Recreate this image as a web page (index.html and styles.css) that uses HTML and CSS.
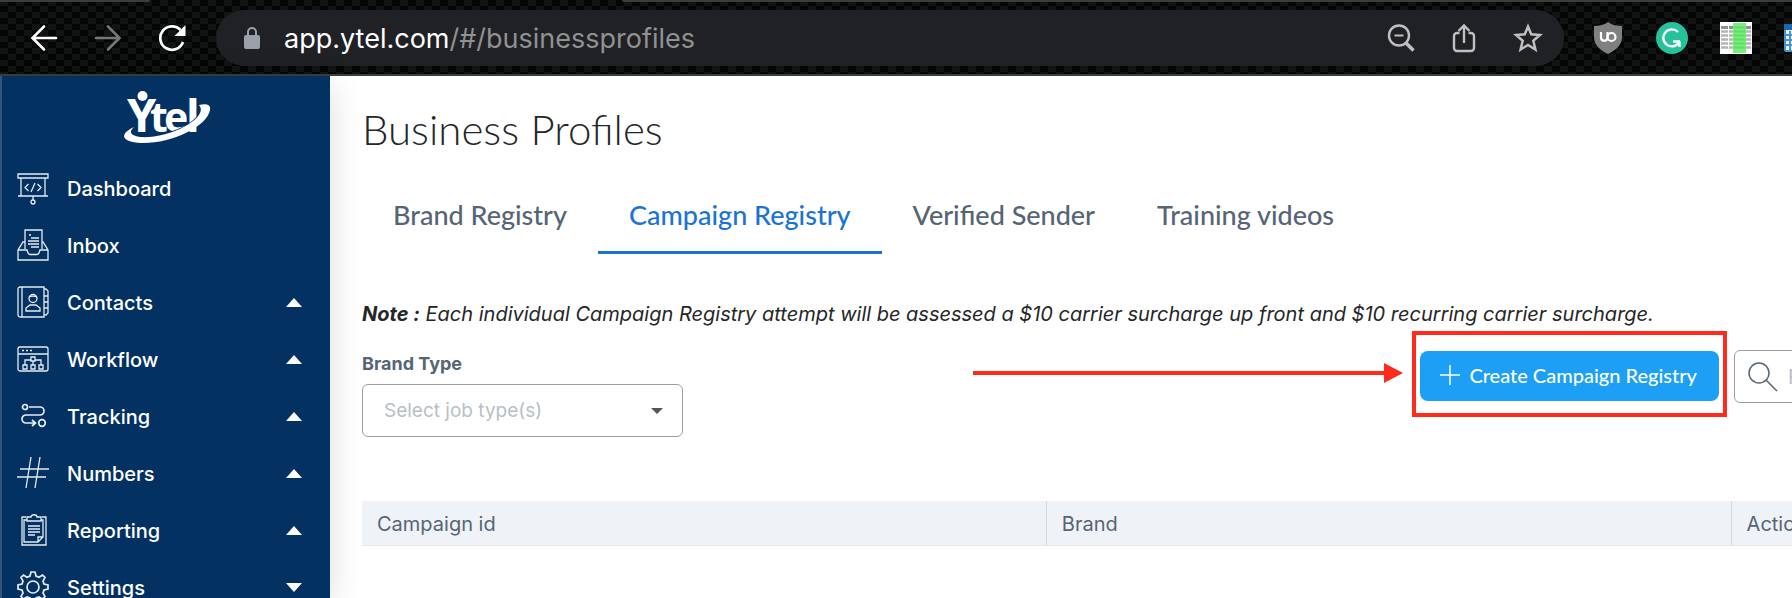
FILE: index.html
```html
<!DOCTYPE html>
<html lang="en">
<head>
<meta charset="utf-8">
<title>Business Profiles</title>
<link rel="stylesheet" href="styles.css">
</head>
<body>
<header class="browser">
  <div class="tabstrip"><span class="tab-left"></span><span class="tab-right"></span></div>
  <div class="toolbar">
    <div class="nav-buttons">
      <button class="tool" aria-label="Back"><svg width="28" height="28" viewBox="0 0 28 28" fill="none" stroke="#fff" stroke-width="2.600" stroke-linecap="round"><path d="M14 2.500 2.500 14 14 25.500M3 14H26"/></svg></button>
      <button class="tool" aria-label="Forward"><svg width="28" height="28" viewBox="0 0 28 28" fill="none" stroke="#777" stroke-width="2.600" stroke-linecap="round"><path d="M14 2.500 25.500 14 14 25.500M25 14H2"/></svg></button>
      <button class="tool" aria-label="Reload"><svg width="28" height="28" viewBox="0 0 28 28"><path d="M25 18A11.700 11.700 0 1 1 22.500 6" fill="none" stroke="#fff" stroke-width="2.700"/><path d="M27.500 1V12H16.500Z" fill="#fff"/></svg></button>
    </div>
    <div class="address">
      <svg class="lock" width="16" height="22" viewBox="0 0 16 22"><rect y="8" width="16" height="14" rx="2" fill="#9aa0a9"/><path d="M4 9V5a4 4 0 0 1 8 0V9" fill="none" stroke="#9aa0a9" stroke-width="2"/></svg>
      <span class="url">app.ytel.com<span class="path">/#/businessprofiles</span></span>
      <button class="tool" aria-label="Zoom out"><svg width="28" height="28" viewBox="0 0 28 28" fill="none" stroke="#c0c0c0" stroke-width="2.400"><circle cx="12" cy="11.500" r="10"/><path d="M18.500 18.500 26.500 26.500" stroke-width="3.500"/><path d="M7.500 11.500h9" stroke-width="2"/></svg></button>
      <button class="tool" aria-label="Share"><svg width="24" height="30" viewBox="0 0 24 30" fill="none" stroke="#c0c0c0" stroke-width="2.400"><path d="M7.500 10H5a3 3 0 0 0-3 3V25a3 3 0 0 0 3 3H19a3 3 0 0 0 3-3V13a3 3 0 0 0-3-3H16.500M12 20V3M6.500 8 12 2.500 17.500 8"/></svg></button>
      <button class="tool" aria-label="Bookmark"><svg width="30" height="30" viewBox="0 0 30 30" fill="none" stroke="#c0c0c0" stroke-width="2.500"><path d="M15 3.500 18.200 11.300 27 12 20.300 17.800 22.400 26.500 15 21.900 7.600 26.500 9.700 17.800 3 12 11.800 11.300Z"/></svg></button>
    </div>
    <div class="extensions">
      <button class="tool" aria-label="uBlock Origin"><svg width="32" height="32" viewBox="0 0 32 32"><path d="M16 0C12 3 7 4 2 4V15C2 23 8 28 16 32C24 28 30 23 30 15V4C25 4 20 3 16 0Z" fill="#808080"/><path d="M9 10v6a3.300 3.300 0 0 0 6.500 0V10" fill="none" stroke="#fff" stroke-width="2.200"/><circle cx="19.500" cy="15" r="4" fill="none" stroke="#fff" stroke-width="2.200"/></svg></button>
      <button class="tool" aria-label="Grammarly"><svg width="32" height="32" viewBox="0 0 32 32"><circle cx="16" cy="16" r="16" fill="#26c29b"/><path d="M22 10A8.500 8.500 0 1 0 23 20.500M17 19.500H24M23.500 25V19.500" fill="none" stroke="#fff" stroke-width="2.400"/></svg></button>
      <button class="tool" aria-label="Table columns"><svg width="32" height="32" viewBox="0 0 32 32"><path fill="#fff" d="M0 0h32v32H0z"/><path d="M1 5.500h30" stroke="#89929b" stroke-width="3" stroke-dasharray="7 1"/><path d="M1 9.500h30M1 13.500h30M1 17.500h30M1 21.500h30M1 25.500h30" stroke="#b5b5b5" stroke-width="2.500" stroke-dasharray="7 1"/><path fill="#78ee7b" d="M13 1h13v30H13z"/><path d="M14 5.500h11M14 9.500h11M14 13.500h11M14 17.500h11M14 21.500h11M14 25.500h11" stroke="#63d968" stroke-width="2"/></svg></button>
      <button class="tool" aria-label="Calendar"><svg width="32" height="32" viewBox="0 0 32 32"><rect y="2" width="32" height="28" rx="2" fill="#4b94cf"/><path d="M2 8h28v20H2z" fill="#e8f3fb"/><path d="M0 2h32v6H0z" fill="#1c67ad"/><path d="M2 13h28M2 18h28M2 23h28M6 9v19M11 9v19M16 9v19" stroke="#4b94cf" stroke-width="2"/></svg></button>
    </div>
  </div>
</header>
<div class="app">
  <nav class="sidebar">
    <a class="logo" href="#" aria-label="Ytel home">
      <svg width="88" height="56" viewBox="0 0 88 56" fill="#fff">
        <circle cx="19.500" cy="6" r="5"/>
        <g class="logo-type"><text x="4" y="42" font-size="47">Y</text><text x="27" y="42" font-size="41">t</text><text x="41" y="42" font-size="41">e</text><text x="63" y="42" font-size="45">l</text></g>
        <path d="M22 46C46 44 66 37 76 24L80 26L50 50Z" fill="#033262"/>
        <path d="M76 15C84 13 88 15 87 20C84 37 47 54 18 53C-2 52-4 44 11 37C3 44 12 48 26 47C54 45 86 26 76 15Z"/>
      </svg>
    </a>
    <ul class="menu">
      <li><a href="#"><svg class="icon" viewBox="0 0 32 32"><path d="M1 1h30v4H1zM4 5v18M28 5v18M1 23h30M16 23v4M11.500 11 8 14.500l3.500 3.500M20.500 11l3.500 3.500-3.500 3.500M18 10l-4 9"/><circle cx="16" cy="29" r="2"/></svg><span>Dashboard</span></a></li>
      <li><a href="#"><svg class="icon" viewBox="0 0 32 32"><path d="M8 19V0h17v19M7.500 12H6L1 20V30H31V20L26 12H25M1 20H10C11 23 11 24.500 13 24.500H20C22 24.500 22 23 23 20H31M12 5h2M14 8h8M11 11h11M11 14h11M14 17h8"/></svg><span>Inbox</span></a></li>
      <li><a href="#"><svg class="icon" viewBox="0 0 32 32"><path d="M3 0H27V30H3A2 2 0 0 1 1 28V2A2 2 0 0 1 3 0ZM5 0V30M27 2h2l2 2v5h-4M27 9h4v6h-4M27 15h4v6h-4M27 21h4v5l-2 2h-2M9 24V21l4-3h6l4 3v3ZM12 10c2-1 6-1 8 0"/><circle cx="16" cy="11.500" r="4"/></svg><span>Contacts</span><svg class="chev" viewBox="0 0 16 9"><path d="M8 0 16 9H0Z"/></svg></a></li>
      <li><a href="#"><svg class="icon" viewBox="0 0 32 32"><rect x="1" y="3" width="30" height="24" rx="2"/><path d="M1 10H31M5 6.500h2M9 6.500h2M13 6.500h2M14 13h4v4h-4zM6 21h4v4H6zM14 21h4v4h-4zM22 21h4v4h-4zM16 17v4M8 21v-5h6M18 16h6v5"/></svg><span>Workflow</span><svg class="chev" viewBox="0 0 16 9"><path d="M8 0 16 9H0Z"/></svg></a></li>
      <li><a href="#"><svg class="icon thick" viewBox="0 0 32 32"><circle cx="8" cy="6" r="2.500"/><circle cx="25" cy="22" r="3.300"/><path d="M12 6H23a4 4 0 0 1 0 8H9a4 4 0 0 0 0 8H18M15 19l3.500 3-3.500 3"/></svg><span>Tracking</span><svg class="chev" viewBox="0 0 16 9"><path d="M8 0 16 9H0Z"/></svg></a></li>
      <li><a href="#"><svg class="icon" viewBox="0 0 32 32"><path d="M14-1 9 30M23-1 18 30M3 11H32M0 19H29"/></svg><span>Numbers</span><svg class="chev" viewBox="0 0 16 9"><path d="M8 0 16 9H0Z"/></svg></a></li>
      <li><a href="#"><svg class="icon" viewBox="0 0 32 32"><path d="M9 2H5V30H29V2H25M10 5H7V27H21L26 22V5H24M21 27V22h5M10 6V2h4c0-3 6-3 6 0h4v4ZM11 11h12M11 14h12M11 17h12M11 20h7"/></svg><span>Reporting</span><svg class="chev" viewBox="0 0 16 9"><path d="M8 0 16 9H0Z"/></svg></a></li>
      <li><a href="#"><svg class="icon thick" viewBox="0 0 32 32"><circle cx="16" cy="15" r="6"/><path d="M14 0h4l1 4 3 1.200L25.500 3 28 5.500 26 9l1 3 4 1v4l-4 1-1 3 2 3.500L25.500 27 22 25l-3 1-1 4h-4l-1-4-3-1-3.500 2L4 24.500 6 21l-1-3-4-1v-4l4-1 1-3L4 5.500 6.500 3 10 5.200 13 4Z"/></svg><span>Settings</span><svg class="chev" viewBox="0 0 16 9"><path d="M0 0H16L8 9Z"/></svg></a></li>
    </ul>
  </nav>
  <main class="main">
    <div class="content">
      <h1>Business Profiles</h1>
      <div class="tabs" role="tablist">
        <button role="tab">Brand Registry</button>
        <button role="tab" class="active" aria-selected="true">Campaign Registry</button>
        <button role="tab">Verified Sender</button>
        <button role="tab">Training videos</button>
      </div>
      <p class="note"><strong>Note :</strong> Each individual Campaign Registry attempt will be assessed a $10 carrier surcharge up front and $10 recurring carrier surcharge.</p>
      <div class="filters">
        <div class="field">
          <label for="brand-type">Brand Type</label>
          <div class="select">
            <select id="brand-type"><option>Select job type(s)</option></select>
            <svg width="12" height="6" viewBox="0 0 12 6"><path d="M0 0H12L6 6Z" fill="#555"/></svg>
          </div>
        </div>
        <div class="actions">
          <div class="callout">
            <button class="create"><svg width="20" height="20" viewBox="0 0 20 20" stroke="#fff" stroke-width="1.500"><path d="M10 0V20M0 10H20"/></svg>Create Campaign Registry</button>
            <span class="frame"></span>
            <svg class="arrow" width="430" height="20" viewBox="0 0 430 20"><path d="M0 8H411V0L430 10 411 20V12H0Z" fill="#ff2a1c"/></svg>
          </div>
          <div class="search">
            <svg width="30" height="30" viewBox="0 0 30 30" fill="none" stroke="#566575" stroke-width="1.500"><circle cx="11" cy="11" r="10"/><path d="M18 18 29 29"/></svg>
            <input type="search" placeholder="Find" aria-label="Find">
          </div>
        </div>
      </div>
      <table>
        <thead><tr><th>Campaign id</th><th>Brand</th><th>Actions</th></tr></thead>
      </table>
    </div>
  </main>
</div>
</body>
</html>
```

FILE: styles.css
```css
* { box-sizing: border-box; }
body { margin: 0; height: 100vh; overflow: hidden; display: flex; flex-direction: column; background: #fff; font-family: Inter, "Liberation Sans", sans-serif; color: #242628; }
button { font: inherit; border: 0; padding: 0; background: none; cursor: pointer; }
svg { display: block; flex: none; }

.browser { flex: none; border-bottom: 2px solid #3d3d3e; background-color: #121313; background-image: conic-gradient(#040505 25%, transparent 0 50%, #040505 0 75%, transparent 0); background-size: 16px 12px; }
.tabstrip { display: flex; justify-content: space-between; gap: 472px; height: 2px; }
.tab-left { width: 150px; background: #3d3d3e; border-radius: 0 0 4px 0; }
.tab-right { flex: 1; background: #3d3d3e; border-radius: 0 0 0 4px; }
.toolbar { display: flex; align-items: center; padding: 8px 0; height: 72px; overflow: hidden; }
.nav-buttons { display: flex; gap: 36px; padding: 0 30px; width: 216px; flex: none; }
.address { flex: 1; display: flex; align-items: center; gap: 37px; height: 56px; padding: 0 21px 0 28px; border-radius: 28px; background: #202124; }
.lock { margin-right: -13px; }
.url { flex: 1; font-size: 27px; color: #fff; }
.path { color: #909192; }
.extensions { display: flex; gap: 32px; width: 228px; padding-left: 28px; flex: none; }

.app { flex: 1; display: flex; min-height: 0; border-left: 2px solid #35597f; }
.sidebar { width: 328px; flex: none; background: #033262; box-shadow: 0 8px 32px rgba(0, 0, 0, .14); overflow: hidden; z-index: 1; }
.logo { display: block; width: 88px; margin: 14px auto 14px 121px; }
.logo svg { overflow: visible; }
.logo-type { font-family: "Open Sans", sans-serif; font-weight: 700; }
.menu { list-style: none; margin: 0; padding: 0; }
.menu a { display: flex; align-items: center; gap: 18px; height: 57px; padding: 0 28px 0 15px; color: #fff; font-size: 20px; font-weight: 500; text-decoration: none; }
.menu span { flex: 1; }
.icon { width: 32px; height: 32px; fill: none; stroke: #e6ecf2; stroke-width: 1.3; overflow: visible; }
.thick { stroke-width: 1.7; }
.chev { width: 16px; height: 9px; fill: #fff; }

.main { flex: 1; min-width: 0; overflow: hidden; padding-left: 32px; }
.content { width: calc(100% + 282px); }
h1 { margin: 27px 0 0; font: 300 42px/52px Lato, sans-serif; }
.tabs { display: flex; margin-top: 29px; }
.tabs button { height: 70px; padding: 0 31px 6px; border-bottom: 3px solid transparent; font: 500 27px/32px Lato, sans-serif; color: #566575; }
.tabs .active { color: #1a73d6; border-color: #1a73d6; }
.note { margin: 46px 0 0; font-size: 20px; line-height: 28px; font-style: italic; }
.filters { display: flex; justify-content: space-between; margin-top: 22px; }
.field label { display: block; font-size: 18px; font-weight: 700; line-height: 28px; margin-bottom: 6px; color: #566575; }
.select { display: grid; align-items: center; width: 321px; }
.select > * { grid-area: 1 / 1; }
.select svg { justify-self: end; margin-right: 20px; pointer-events: none; }
select { appearance: none; width: 100%; height: 53px; padding: 0 21px; border: 1px solid #97a0aa; border-radius: 6px; background: #fff; font: 19px Inter, sans-serif; color: #b7bfc5; }
.actions { display: flex; gap: 15px; }
.callout { position: relative; padding-top: 1px; }
.create { display: flex; align-items: center; gap: 9px; height: 50px; padding: 0 22px 2px 20px; border-radius: 8px; background: #1c9ff4; color: #fff; font: 500 20px/24px Lato, sans-serif; }
.frame { position: absolute; inset: -19px -8px auto; height: 86px; border: 4px solid #ff2a1c; pointer-events: none; }
.arrow { position: absolute; right: calc(100% + 17px); top: 13px; }
.search { display: flex; align-items: center; gap: 10px; width: 340px; height: 53px; padding: 0 13px; border: 1px solid #97a0aa; border-radius: 6px; }
.search input { flex: 1; min-width: 0; border: 0; outline: 0; padding: 0; background: none; font: 20px Inter, sans-serif; }
.search input::placeholder { color: #b7bfc5; }
table { width: 100%; margin-top: 64px; table-layout: fixed; border-collapse: separate; border-spacing: 0; }
th { width: 40%; height: 45px; padding: 2px 15px 0; background: #eff3f7; border-right: 1px solid #d3d8dc; border-bottom: 1px solid #e2e7ea; font-size: 20px; font-weight: 400; text-align: left; color: #566575; }
th:last-child { width: 20%; border-right: 0; }
```
